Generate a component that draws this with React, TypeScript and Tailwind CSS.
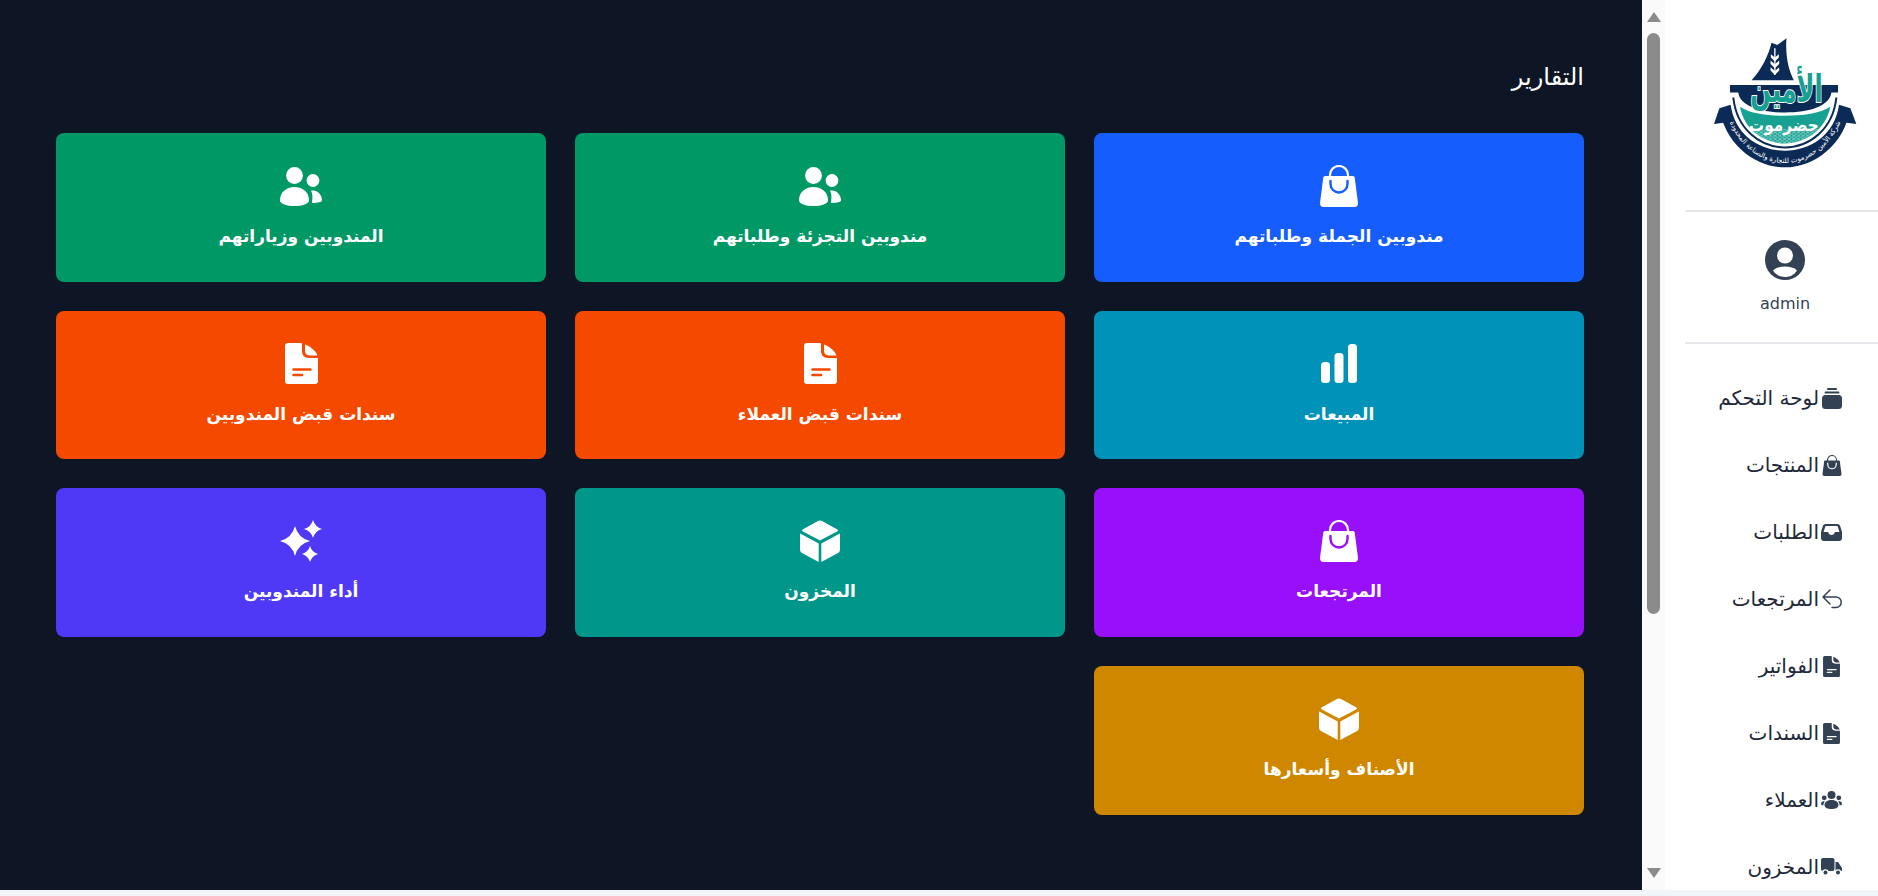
type IconProps = { className?: string; hole?: string };

function BagIcon({ className, hole = "#fff" }: IconProps) {
  return (
    <svg viewBox="0 0 38 42" fill="currentColor" className={className}>
      <path d="M5 11 H33 Q34.5 11 34.7 12.5 L38 38 Q38 42 34.5 42 H3.5 Q0 42 0 38 L3.3 12.5 Q3.5 11 5 11 Z" />
      <path d="M10 12 V10 a9 9 0 0 1 18 0 V12" fill="none" stroke="currentColor" strokeWidth="2.2" />
      <path d="M10.5 16 V19 a8.5 8.5 0 0 0 17 0 V16" fill="none" stroke={hole} strokeWidth="2.4" strokeLinecap="round" />
    </svg>
  );
}

function PeopleIcon({ className }: IconProps) {
  return (
    <svg viewBox="0 0 42 39" fill="currentColor" className={className}>
      <circle cx="14.5" cy="8.5" r="8.4" />
      <path d="M0 33.5 C0 24.5 7 20 14.5 20 C22 20 29 24.5 29 33.5 C29 37 22 39 14.5 39 C7 39 0 37 0 33.5 Z" />
      <circle cx="33" cy="13.5" r="6.4" />
      <path d="M31 23.8 C37 22.5 42 27.5 42 33.5 C42 35 38 36 32 36 C32.5 31 33 27.5 31 23.8 Z" />
    </svg>
  );
}

function BarsIcon({ className }: IconProps) {
  return (
    <svg viewBox="0 0 36 39" fill="currentColor" className={className}>
      <rect x="0" y="18" width="9" height="21" rx="3.5" />
      <rect x="13.5" y="9" width="9" height="30" rx="3.5" />
      <rect x="27" y="0" width="9" height="39" rx="3.5" />
    </svg>
  );
}

function DocIcon({ className, hole = "#fff" }: IconProps) {
  return (
    <svg viewBox="0 0 33 41" fill="currentColor" className={className}>
      <path d="M3 0 H16 Q17 0 17 1 V8 Q17 15 24 15 H33 V38 Q33 41 30 41 H3 Q0 41 0 38 V3 Q0 0 3 0 Z" />
      <path d="M20 1.5 C25 3 31 8 32.5 12.5 H25 Q20 12 20 8 Z" />
      <path d="M8.5 26.5 H25.5 M8.5 32 H17" stroke={hole} strokeWidth="2.6" strokeLinecap="round" />
    </svg>
  );
}

function CubeIcon({ className }: IconProps) {
  return (
    <svg viewBox="0 0 42 42" fill="currentColor" className={className}>
      <path d="M19.5 0.8 Q21 0 22.5 0.8 L38.5 9.6 Q39.5 10.4 38.5 11.2 L21 20.5 L3.5 11.2 Q2.5 10.4 3.5 9.6 Z" />
      <path d="M1.2 13.6 L19.7 23.4 V42 L3 33 Q1 31.8 1 29.5 V14 Z" />
      <path d="M40.8 13.6 L22.3 23.4 V42 L39 33 Q41 31.8 41 29.5 V14 Z" />
    </svg>
  );
}

function SparkIcon({ className }: IconProps) {
  return (
    <svg viewBox="0 0 42 42" fill="currentColor" className={className}>
      <path d="M15 6 Q18 18 30 21 Q18 24 15 36 Q12 24 0 21 Q12 18 15 6 Z" />
      <path d="M33 0 Q35 7 42 9 Q35 11 33 18 Q31 11 24 9 Q31 7 33 0 Z" />
      <path d="M30 26 Q31.8 32.2 38 34 Q31.8 35.8 30 42 Q28.2 35.8 22 34 Q28.2 32.2 30 26 Z" />
    </svg>
  );
}

function StackIcon({ className }: IconProps) {
  return (
    <svg viewBox="0 0 20 21" fill="currentColor" className={className}>
      <rect x="0" y="7" width="20" height="14" rx="3.5" />
      <rect x="2.5" y="3.5" width="15" height="2" rx="1" />
      <rect x="5" y="0" width="10" height="2" rx="1" />
    </svg>
  );
}

function TrayIcon({ className }: IconProps) {
  return (
    <svg viewBox="0 0 21 17" fill="currentColor" className={className}>
      <path
        fillRule="evenodd"
        d="M4.5 0 H16.5 Q18 0 19 1.5 L21 8 V14 Q21 17 18 17 H3 Q0 17 0 14 V8 L2 1.5 Q3 0 4.5 0 Z M4.5 2 L2.6 8 H7 Q8 11 10.5 11 Q13 11 14 8 H18.4 L16.5 2 Z"
      />
    </svg>
  );
}

function ReturnIcon({ className }: IconProps) {
  return (
    <svg viewBox="0 0 20 20" fill="none" stroke="currentColor" strokeWidth="1.5" strokeLinecap="round" strokeLinejoin="round" className={className}>
      <path d="M8 1 L1 8 L8 15 M1 8 H14 a5.2 5.2 0 0 1 0 10.5 H10" />
    </svg>
  );
}

function GroupIcon({ className }: IconProps) {
  return (
    <svg viewBox="0 0 21 18" fill="currentColor" className={className}>
      <circle cx="10.5" cy="4" r="4" />
      <circle cx="3.2" cy="6.8" r="2.4" />
      <circle cx="17.8" cy="6.8" r="2.4" />
      <path d="M3.5 14 C3.5 10.5 7 9 10.5 9 C14 9 17.5 10.5 17.5 14 C17.5 17 14 18 10.5 18 C7 18 3.5 17 3.5 14 Z" />
      <path d="M0 12.8 C0 11 1.5 10 3.8 10 C3 11.2 2.4 12.6 2.4 14.5 C1 14.4 0 13.8 0 12.8 Z" />
      <path d="M21 12.8 C21 11 19.5 10 17.2 10 C18 11.2 18.6 12.6 18.6 14.5 C20 14.4 21 13.8 21 12.8 Z" />
    </svg>
  );
}

function TruckIcon({ className }: IconProps) {
  return (
    <svg viewBox="0 0 21 18" fill="currentColor" className={className}>
      <rect x="0" y="0" width="13.5" height="13" rx="2" />
      <path d="M14.5 4 H17 L21 10 V13 H14.5 Z" />
      <circle cx="4.5" cy="14.5" r="2.6" stroke="#fff" strokeWidth="1.2" />
      <circle cx="17" cy="14.5" r="2.6" stroke="#fff" strokeWidth="1.2" />
    </svg>
  );
}

function UserIcon({ className }: IconProps) {
  return (
    <svg viewBox="0 0 40 40" className={className}>
      <circle cx="20" cy="20" r="20" fill="#334155" />
      <circle cx="20" cy="15.5" r="8" fill="#fff" />
      <path d="M8 30.5 C11 27.5 15 26.5 20 26.5 C25 26.5 29 27.5 32 30.5 C29 35 25 37 20 37 C15 37 11 35 8 30.5 Z" fill="#fff" />
    </svg>
  );
}

const cards = [
  { title: "مندوبين الجملة وطلباتهم", icon: BagIcon, size: "w-[38px] h-[42px]", bg: "bg-[#155dfc]", hole: "#155dfc" },
  { title: "مندوبين التجزئة وطلباتهم", icon: PeopleIcon, size: "w-[42px] h-[39px]", bg: "bg-[#009966]", hole: "#009966" },
  { title: "المندوبين وزياراتهم", icon: PeopleIcon, size: "w-[42px] h-[39px]", bg: "bg-[#009966]", hole: "#009966" },
  { title: "المبيعات", icon: BarsIcon, size: "w-[36px] h-[39px]", bg: "bg-[#0092b8]", hole: "#0092b8" },
  { title: "سندات قبض العملاء", icon: DocIcon, size: "w-[33px] h-[41px]", bg: "bg-[#f54900]", hole: "#f54900" },
  { title: "سندات قبض المندوبين", icon: DocIcon, size: "w-[33px] h-[41px]", bg: "bg-[#f54900]", hole: "#f54900" },
  { title: "المرتجعات", icon: BagIcon, size: "w-[38px] h-[42px]", bg: "bg-[#9810fa]", hole: "#9810fa" },
  { title: "المخزون", icon: CubeIcon, size: "w-[42px] h-[42px]", bg: "bg-[#009689]", hole: "#009689" },
  { title: "أداء المندوبين", icon: SparkIcon, size: "w-[42px] h-[42px]", bg: "bg-[#4f39f6]", hole: "#4f39f6" },
  { title: "الأصناف وأسعارها", icon: CubeIcon, size: "w-[42px] h-[42px]", bg: "bg-[#d08700]", hole: "#d08700" },
];

const nav = [
  { title: "لوحة التحكم", icon: StackIcon, size: "w-[20px] h-[21px]" },
  { title: "المنتجات", icon: BagIcon, size: "w-[20px] h-[21px]" },
  { title: "الطلبات", icon: TrayIcon, size: "w-[21px] h-[17px]" },
  { title: "المرتجعات", icon: ReturnIcon, size: "w-[20px] h-[20px]" },
  { title: "الفواتير", icon: DocIcon, size: "w-[17px] h-[21px]" },
  { title: "السندات", icon: DocIcon, size: "w-[17px] h-[21px]" },
  { title: "العملاء", icon: GroupIcon, size: "w-[21px] h-[18px]" },
  { title: "المخزون", icon: TruckIcon, size: "w-[21px] h-[18px]" },
];

function Logo() {
  return (
    <svg viewBox="222 108 430 394" className="w-[143px] h-[131px]">
      <defs>
        <pattern id="logo-net" width="14" height="10" patternUnits="userSpaceOnUse">
          <path d="M0 5 L7 0 L14 5 L7 10 Z" fill="none" stroke="#d5ece8" strokeWidth="1.6" />
        </pattern>
      </defs>
      <path d="M335 238 C365 205 385 165 395 125 L412 132 L440 112 C436 160 445 205 462 238 Z" fill="#0c2a56" />
      <path d="M405 142 V222" stroke="#fff" strokeWidth="4" />
      <path d="M405 170 l-12 -10 v10 l12 12 l12 -12 v-10 Z M405 190 l-13 -11 v10 l13 13 l13 -13 v-10 Z M405 210 l-13 -11 v10 l13 13 l13 -13 v-10 Z" fill="#fff" />
      <path d="M270 252 H595 V275 H575 C570 315 510 335 435 335 C360 335 300 315 295 275 H270 Z" fill="#0c2a56" />
      <path d="M300 318 C330 338 380 345 435 345 C490 345 540 338 572 318 C555 395 490 428 435 428 C380 428 315 395 300 318 Z" fill="#16a193" />
      <path d="M322 385 H550 C525 412 480 428 435 428 C390 428 347 412 322 385 Z" fill="url(#logo-net)" />
      <path d="M280 290 C290 385 360 440 435 440 C510 440 580 385 590 290" fill="none" stroke="#0c2a56" strokeWidth="6" />
      <path d="M238 322 L272 312 C285 405 360 450 435 450 C510 450 585 405 598 312 L632 322 C615 430 525 500 435 500 C345 500 255 430 238 322 Z" fill="#0c2a56" />
      <path d="M238 322 L222 370 L256 365 Z M632 322 L650 370 L616 365 Z" fill="#0c2a56" />
      <path id="logo-arc" d="M262 345 C290 430 360 487 435 487 C510 487 580 430 610 345" fill="none" />
      <text fontSize="21" fill="#fff" fontFamily="'DejaVu Sans', sans-serif" direction="rtl">
        <textPath href="#logo-arc" startOffset="50%" textAnchor="middle">شركة الأمين حضرموت للتجارة والصناعة المحدودة</textPath>
      </text>
      <text transform="translate(440 304) scale(0.95 1.5)" textAnchor="middle" fontSize="76" fontWeight="700" fill="#15a092" stroke="#fff" strokeWidth="4" paintOrder="stroke" fontFamily="'DejaVu Sans', sans-serif">الأمين</text>
      <text transform="translate(432 392) scale(1 1.15)" textAnchor="middle" fontSize="46" fontWeight="700" fill="#fff" fontFamily="'DejaVu Sans', sans-serif">حضرموت</text>
    </svg>
  );
}

function ScrollColumn() {
  return (
    <div className="w-[23px] shrink-0 bg-[#fafafa] flex flex-col items-center">
      <div className="mt-[12px] w-0 h-0 border-x-[7px] border-x-transparent border-b-[10px] border-b-[#8b8b8b]" />
      <div className="mt-[11px] w-[13px] h-[581px] rounded-full bg-[#8b8b8b]" />
      <div className="mt-[254px] w-0 h-0 border-x-[7px] border-x-transparent border-t-[10px] border-t-[#8b8b8b]" />
    </div>
  );
}

export default function App() {
  return (
    <div dir="ltr" className="h-[896px] overflow-hidden flex bg-[#f1f5f9] font-['DejaVu_Sans',sans-serif]">
      <main dir="rtl" className="w-[1642px] h-[890px] bg-[#0e1525] pr-[58px] pl-[56px] pt-[61px]">
        <h1 className="text-2xl leading-8 text-white mb-[40px]">التقارير</h1>
        <div className="grid grid-cols-3 gap-[29px]">
          {cards.map((c) => (
            <div key={c.title} className={`h-[148.67px] rounded-lg flex flex-col items-center pt-[32px] text-white ${c.bg}`}>
              <div className="h-[42px] flex items-center justify-center">
                <c.icon className={c.size} hole={c.hole} />
              </div>
              <p className="mt-[15px] text-[17px] font-bold leading-7">{c.title}</p>
            </div>
          ))}
        </div>
      </main>
      <div className="h-[890px] flex overflow-hidden">
        <ScrollColumn />
        <aside dir="rtl" className="w-[213px] bg-white h-[890px] overflow-hidden">
          <div className="flex justify-center pt-[37px] pl-[27px] h-[210px]">
            <Logo />
          </div>
          <div className="ml-[20px] h-[2px] bg-[#e5e7eb]" />
          <div className="h-[130px] flex flex-col items-center pl-[27px] pt-[28px] text-[#334155]">
            <UserIcon className="w-[40px] h-[40px]" />
            <span className="text-base mt-[12px]">admin</span>
          </div>
          <div className="ml-[20px] h-[2px] bg-[#e5e7eb]" />
          <nav className="pt-[40px] pr-[36px] flex flex-col gap-[39px]">
            {nav.map((n) => (
              <div key={n.title} className="flex items-center gap-[2px] h-7 text-[20px] text-[#1e293b]">
                <span className="w-[21px] flex justify-center text-[#334155]">
                  <n.icon className={n.size} />
                </span>
                <span>{n.title}</span>
              </div>
            ))}
          </nav>
        </aside>
      </div>
    </div>
  );
}
